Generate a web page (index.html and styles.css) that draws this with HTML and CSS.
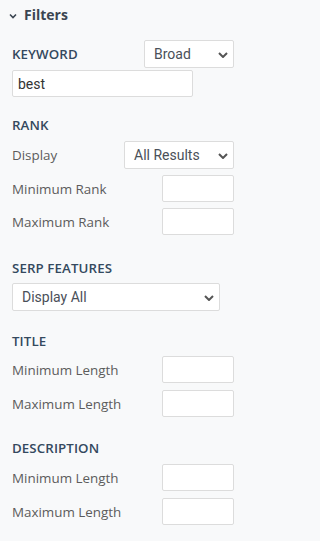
FILE: index.html
```html
<!DOCTYPE html>
<html>
<head>
<meta charset="utf-8">
<link rel="stylesheet" href="styles.css">
</head>
<body>
<div class="panel">
  <div class="panel-head">
    <svg class="head-chev" width="8" height="6" viewBox="0 0 8 6"><path d="M1 1.5 L4 4.5 L7 1.5" fill="none" stroke="#3b4551" stroke-width="1.6"/></svg>
    <span class="panel-title">Filters</span>
  </div>

  <div class="section section-first">
    <div class="row row-keyword">
      <span class="heading">KEYWORD</span>
      <div class="select select-broad"><span>Broad</span>
        <svg class="chev" width="10" height="6" viewBox="0 0 10 6"><path d="M1 1 L5 5 L9 1" fill="none" stroke="#555" stroke-width="2"/></svg>
      </div>
    </div>
    <div class="text-input text-keyword">best</div>
  </div>

  <div class="section section-rank">
    <div class="heading heading-block">RANK</div>
    <div class="rows">
      <div class="row">
        <span class="label">Display</span>
        <div class="select select-display"><span>All Results</span>
          <svg class="chev" width="10" height="6" viewBox="0 0 10 6"><path d="M1 1 L5 5 L9 1" fill="none" stroke="#555" stroke-width="2"/></svg>
        </div>
      </div>
      <div class="row"><span class="label">Minimum Rank</span><div class="num-input"></div></div>
      <div class="row"><span class="label">Maximum Rank</span><div class="num-input"></div></div>
    </div>
  </div>

  <div class="section section-serp">
    <div class="heading heading-block">SERP FEATURES</div>
    <div class="select select-wide"><span>Display All</span>
      <svg class="chev" width="10" height="6" viewBox="0 0 10 6"><path d="M1 1 L5 5 L9 1" fill="none" stroke="#555" stroke-width="2"/></svg>
    </div>
  </div>

  <div class="section section-title">
    <div class="heading heading-block">TITLE</div>
    <div class="rows">
      <div class="row"><span class="label">Minimum Length</span><div class="num-input"></div></div>
      <div class="row"><span class="label">Maximum Length</span><div class="num-input"></div></div>
    </div>
  </div>

  <div class="section section-desc">
    <div class="heading heading-block">DESCRIPTION</div>
    <div class="rows">
      <div class="row"><span class="label">Minimum Length</span><div class="num-input"></div></div>
      <div class="row"><span class="label">Maximum Length</span><div class="num-input"></div></div>
    </div>
  </div>
</div>
</body>
</html>
```

FILE: styles.css
```css
html, body {
  margin: 0;
  padding: 0;
  background: #f8f9fa;
}
body {
  width: 240px;
  height: 541px;
  overflow: hidden;
  font-family: "Open Sans", "Noto Sans", sans-serif;
}
.panel {
  padding: 0 6px 0 12px;
}
.panel-head {
  height: 30px;
  display: flex;
  align-items: center;
  margin-left: -3px;
}
.head-chev {
  margin-right: 7px;
  margin-top: 1px;
}
.panel-title {
  font-size: 14px;
  font-weight: 700;
  color: #3b4551;
  line-height: 20px;
}
.heading {
  font-size: 13.3px;
  font-weight: 600;
  color: #34495e;
  line-height: 20px;
  letter-spacing: 0.1px;
}
.heading-block {
  margin-bottom: 6px;
}
.label {
  font-size: 13.4px;
  color: #5c5c5c;
  line-height: 20px;
}
.section-first {
  margin-top: 10px;
}
.section-rank {
  margin-top: 18px;
}
.section-serp {
  margin-top: 23px;
}
.section-serp .heading-block {
  margin-bottom: 5px;
}
.section-title {
  margin-top: 20px;
}
.section-title .heading-block {
  margin-bottom: 5px;
}
.section-desc {
  margin-top: 21px;
}
.section-desc .heading-block {
  margin-bottom: 6px;
}
.rows {
  display: flex;
  flex-direction: column;
  gap: 7px;
}
.section-rank .rows {
  gap: 6px;
}
.row {
  display: flex;
  align-items: center;
  justify-content: space-between;
}
.row-keyword {
  margin-bottom: 2px;
}
.select {
  position: relative;
  box-sizing: border-box;
  height: 28px;
  background: #fff;
  border: 1px solid #dcdcdc;
  border-radius: 2px;
  display: flex;
  align-items: center;
  padding-left: 9px;
  font-family: Roboto, "Liberation Sans", sans-serif;
  font-size: 14px;
  color: #4a5059;
}
.select .chev {
  position: absolute;
  right: 5px;
  top: 11px;
}
.select-broad {
  width: 90px;
}
.select-display {
  width: 110px;
}
.select-wide {
  width: 208px;
}
.text-input {
  box-sizing: border-box;
  width: 181px;
  height: 27px;
  background: #fff;
  border: 1px solid #dcdcdc;
  border-radius: 2px;
  display: flex;
  align-items: center;
  padding-left: 5px;
  font-family: Roboto, "Liberation Sans", sans-serif;
  font-size: 14px;
  color: #333;
}
.num-input {
  box-sizing: border-box;
  width: 72px;
  height: 27px;
  background: #fff;
  border: 1px solid #dcdcdc;
  border-radius: 2px;
}
```
